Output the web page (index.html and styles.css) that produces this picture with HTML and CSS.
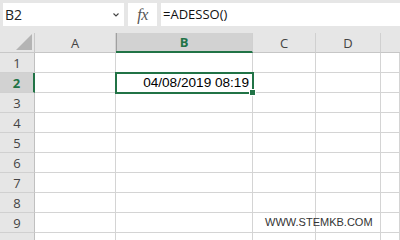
FILE: index.html
```html
<!DOCTYPE html>
<html>
<head>
<meta charset="utf-8">
<link rel="stylesheet" href="styles.css">
</head>
<body>
<div class="topbar">
  <div class="namebox"><span class="name">B2</span><svg class="chev" width="6" height="4" viewBox="0 0 6 4"><path d="M0.5 0.5 L3 3 L5.5 0.5" fill="none" stroke="#444" stroke-width="1.1"/></svg></div>
  <div class="fxbox"><span class="fx">fx</span></div>
  <div class="formula">=ADESSO()</div>
</div>
<div class="sheet">
  <div class="hdr corner"><span class="tri"></span></div>
  <div class="hdr col">A</div>
  <div class="hdr col sel">B</div>
  <div class="hdr col">C</div>
  <div class="hdr col">D</div>
  <div class="hdr col last"></div>

  <div class="hdr row">1</div><div class="cell"></div><div class="cell"></div><div class="cell"></div><div class="cell"></div><div class="cell"></div>
  <div class="hdr row selrow">2</div><div class="cell"></div><div class="cell active">04/08/2019 08:19<span class="handle"></span></div><div class="cell"></div><div class="cell"></div><div class="cell"></div>
  <div class="hdr row">3</div><div class="cell"></div><div class="cell"></div><div class="cell"></div><div class="cell"></div><div class="cell"></div>
  <div class="hdr row">4</div><div class="cell"></div><div class="cell"></div><div class="cell"></div><div class="cell"></div><div class="cell"></div>
  <div class="hdr row">5</div><div class="cell"></div><div class="cell"></div><div class="cell"></div><div class="cell"></div><div class="cell"></div>
  <div class="hdr row">6</div><div class="cell"></div><div class="cell"></div><div class="cell"></div><div class="cell"></div><div class="cell"></div>
  <div class="hdr row">7</div><div class="cell"></div><div class="cell"></div><div class="cell"></div><div class="cell"></div><div class="cell"></div>
  <div class="hdr row">8</div><div class="cell"></div><div class="cell"></div><div class="cell"></div><div class="cell"></div><div class="cell"></div>
  <div class="hdr row">9</div><div class="cell"></div><div class="cell"></div><div class="cell"></div><div class="cell"></div><div class="cell"></div>
  <div class="hdr row"></div><div class="cell"></div><div class="cell"></div><div class="cell"></div><div class="cell"></div><div class="cell"></div>
  <div class="watermark">WWW.STEMKB.COM</div>
</div>
</body>
</html>
```
FILE: styles.css
```css
* { box-sizing: border-box; }
html, body { margin: 0; padding: 0; }
body {
  width: 400px;
  height: 240px;
  overflow: hidden;
  background: #e6e6e6;
  font-family: "Open Sans", "Liberation Sans", sans-serif;
}
.topbar {
  height: 33px;
  display: flex;
  align-items: flex-start;
  padding: 3px 0 0 3px;
  background: #e6e6e6;
}
.namebox {
  width: 121px;
  height: 23px;
  background: #fff;
  display: flex;
  align-items: center;
  justify-content: space-between;
  padding: 0 5px 0 2px;
}
.name {
  font-size: 14px;
  color: #222;
  line-height: 23px;
}
.chev { margin-top: 1px; }
.fxbox {
  margin-left: 4px;
  width: 29px;
  height: 23px;
  background: #fff;
  display: flex;
  align-items: center;
  justify-content: center;
}
.fx {
  font-family: "Liberation Serif", serif;
  font-style: italic;
  font-size: 16px;
  color: #555;
  letter-spacing: -0.5px;
  line-height: 23px;
}
.formula {
  margin-left: 4px;
  flex: 1;
  height: 23px;
  background: #fff;
  font-size: 13px;
  line-height: 23px;
  padding-left: 2px;
  color: #111;
}
.sheet {
  position: relative;
  display: grid;
  grid-template-columns: 35px 81px 137px 63px 65px 1fr;
  grid-auto-rows: 20px;
  background: #fff;
}
.hdr {
  background: #e6e6e6;
  color: #444;
  font-size: 13px;
  display: flex;
  align-items: center;
  justify-content: center;
  border-right: 1px solid #c8c8c8;
  border-bottom: 1px solid #c8c8c8;
}
.col { border-right: 1px solid #d0d0d0; border-bottom: 1px solid #c6c6c6; }
.col.last { border-right: none; }
.corner { position: relative; border-right: 1px solid #c8c8c8; }
.tri {
  position: absolute;
  right: 2px;
  bottom: 2px;
  width: 0;
  height: 0;
  border-left: 16px solid transparent;
  border-bottom: 16px solid #b4b4b4;
}
.sel {
  background: #d2d2d2;
  color: #217346;
  font-weight: bold;
  border-bottom: 2px solid #217346;
  box-shadow: inset 1px 0 0 #a0a0a0;
}
.row { border-right: 1px solid #c0c0c0; border-bottom: 1px solid #d0d0d0; }
.selrow {
  background: #d2d2d2;
  color: #217346;
  font-weight: bold;
  border-right: 2px solid #217346;
}
.cell {
  border-right: 1px solid #d4d4d4;
  border-bottom: 1px solid #d4d4d4;
}
.active {
  position: relative;
  outline: 2px solid #217346;
  outline-offset: -1px;
  font-family: "Liberation Sans", sans-serif;
  font-size: 13.6px;
  color: #000;
  text-align: right;
  padding-right: 3px;
  line-height: 20px;
  z-index: 1;
}
.handle {
  position: absolute;
  right: -3px;
  bottom: -3px;
  width: 5px;
  height: 5px;
  background: #217346;
  border: 1px solid #fff;
  box-sizing: content-box;
  margin: -1px;
}
.watermark {
  position: absolute;
  left: 265px;
  top: 179px;
  height: 20px;
  line-height: 20px;
  font-family: "Liberation Sans", sans-serif;
  font-size: 11px;
  color: #333;
}
```
